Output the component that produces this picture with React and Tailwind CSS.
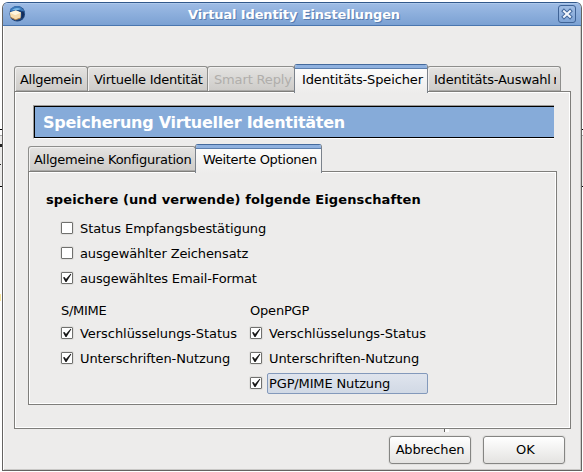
import React from "react";

function Tab({ label, active, disabled, className, textClass = "" }) {
  if (active) {
    return (
      <div
        className={`relative z-10 -mb-[2px] flex h-[29px] flex-col overflow-hidden rounded-t-[3px] border-x border-t border-x-[#7b828b] border-t-[#456a9c] bg-linear-to-b from-white to-[#edeceb] ${className}`}
      >
        <div className="h-[3px] shrink-0 bg-[#8fb1df]" />
        <div className="h-px shrink-0 bg-[#5d80ae]" />
        <span className={`pt-[3px] pl-[7px] leading-[16px] whitespace-nowrap ${textClass}`}>{label}</span>
      </div>
    );
  }
  return (
    <div
      className={`h-[25px] overflow-hidden rounded-t-[3px] border-x border-t border-[#8e8e8c] bg-linear-to-b from-[#e4e3e1] to-[#cdcbc8] shadow-[inset_1px_1px_0_#f1f0ef,inset_0_-1px_0_#aaa9a7] ${className}`}
    >
      <div className={`pt-[5px] pl-[5px] leading-[16px] whitespace-nowrap ${disabled ? "text-[#b0aeab]" : ""} ${textClass}`}>
        {label}
      </div>
    </div>
  );
}

function Check({ label, checked, focused, textClass = "" }) {
  return (
    <div className="flex h-[25px] items-center">
      <span className="-mt-px flex h-[12px] w-[12px] shrink-0 items-center justify-center rounded-[1px] border border-[#70706e] bg-white shadow-[0_0_0_1px_#e0dfdd]">
        {checked && (
          <svg width="10" height="10" viewBox="0 0 10 10" className="block">
            <path d="M1 4.5 2.5 4 4 6 8.6 0.8 9.3 1.3 4.5 9 3.5 9Z" fill="#171717" />
          </svg>
        )}
      </span>
      <span
        className={`ml-[5px] h-[21px] w-[161px] rounded-[2px] border pl-px leading-[19px] whitespace-nowrap ${
          focused ? "border-[#8399bb] bg-linear-to-b from-[#dfe4ed] to-[#d1d9e5]" : "border-transparent"
        } ${textClass}`}
      >
        {label}
      </span>
    </div>
  );
}

function Button({ label, className = "" }) {
  return (
    <button
      className={`h-[28px] w-[82px] rounded-[3px] border border-[#858583] bg-linear-to-b from-white to-[#e4e3e1] pb-px whitespace-nowrap shadow-[0_0_0_1px_#e2e1df] ${className}`}
    >
      {label}
    </button>
  );
}

export default function App() {
  return (
    <div className="relative h-[472px] w-[583px] overflow-hidden bg-white font-['DejaVu_Sans',sans-serif] text-[13px] text-black">
      {/* edges of the windows lying behind the dialog */}
      <div className="absolute top-[129px] left-0 h-[58px] w-[583px] border-y border-black bg-white">
        <div className="mt-[5px] h-px bg-[#aaa]" />
        <div className="h-[50px] bg-[#edeceb]" />
      </div>
      <div className="absolute top-[144px] left-0 h-[3px] w-[2px] bg-[#222]" />
      <div className="absolute top-[164px] left-0 h-px w-px bg-[#222]" />
      <div className="absolute top-[294px] left-0 h-[7px] w-px bg-[#fce79a]" />

      <div className="relative mt-[2px] ml-[2px] flex h-[469px] w-[580px] flex-col overflow-hidden rounded-t-[6px] border border-t-[#31588b] border-r-[#656361] border-b-[#656361] border-l-[#656361] bg-[#edeceb] shadow-[inset_1px_0_0_#fff,inset_-1px_-1px_0_#c9c8c6]">
        <header className="flex h-[23px] shrink-0 items-center border-b border-[#4a76af] bg-linear-to-b from-[#9ebce5] to-[#7ba1d3] px-[5px] shadow-[inset_0_1px_0_#adc8eb]">
          <svg width="18" height="18" viewBox="0 0 18 18" className="shrink-0">
            <circle cx="9.3" cy="8.8" r="7.8" fill="#1d4379" />
            <path d="M2 4Q8-1 13 2.2q4 3 3.5 7-1.6-3.5-5.6-4.2L3 7Z" fill="#3c78b8" />
            <path d="M4 5Q8 1.5 13 4L10 5Z" fill="#78b7e5" />
            <path d="m1.8 7.4 6-2 5.2 2-.4 5.6-5.1 1.8-5-2.5Z" fill="#f7dcae" />
            <path d="m1.8 7.4 5.4 2.8 5.8-2.8-5.2-2Z" fill="#fff5de" />
            <path d="m2.5 12.3 5 2.5 5.1-1.8" fill="none" stroke="#b07c42" />
            <path d="M13 7q2.5 3-.5 6.6l2.7-1.4Q17 9 15.5 6Z" fill="#132c58" />
          </svg>
          <h1 className="flex-1 pt-[2px] pl-[4px] text-center text-[13px] leading-[16px] font-bold tracking-[-0.14px] text-white [text-shadow:1px_1px_0_#587db0]">
            Virtual Identity Einstellungen
          </h1>
          <button className="flex h-[18px] w-[18px] items-center justify-center rounded-[3px] border border-[#3f6396] bg-linear-to-b from-[#a0bde4] to-[#7fa4d6]">
            <svg width="12" height="12" viewBox="0 0 12 12">
              <path d="m3 3.2 6 5.6m0-5.6-6 5.6" stroke="#456a9d" strokeWidth="4" strokeLinecap="square" />
              <path d="m3 3.2 6 5.6m0-5.6-6 5.6" stroke="#f2f6fc" strokeWidth="2" strokeLinecap="square" />
            </svg>
          </button>
        </header>

        <main className="pt-[38px] pl-[11px]">
          <div className="flex h-[27px] items-end">
            <Tab label="Allgemein" className="w-[74px]" textClass="tracking-[-0.3px]" />
            <Tab label="Virtuelle Identität" className="-ml-px w-[121px]" textClass="pl-[6px] tracking-[-0.25px]" />
            <Tab label="Smart Reply" disabled className="-ml-px w-[88px]" textClass="pl-[6px] tracking-[-0.15px]" />
            <Tab label="Identitäts-Speicher" active className="-ml-px w-[134px]" textClass="tracking-[-0.14px]" />
            <Tab label="Identitäts-Auswahl r" className="-ml-px w-[134px]" textClass="mr-[4px] overflow-hidden pl-[6px] tracking-[-0.22px] [word-spacing:-1.5px]" />
          </div>

          <section className="h-[338px] w-[557px] border border-[#7f7e7b] pt-[13px] shadow-[inset_1px_1px_0_#fff,inset_-1px_-1px_0_#fff]">
            <div className="ml-[18px] w-[521px] border-t border-b border-l border-t-[#9d9b98] border-b-white border-l-[#9d9b98]">
              <h2 className="h-[32px] border-y border-l border-black bg-[#86abd9] pl-[8px] text-[16px] leading-[31px] font-bold tracking-[-0.25px] whitespace-nowrap text-white">
                Speicherung Virtueller Identitäten
              </h2>
            </div>

            <div className="mt-[5px] ml-[13px] flex h-[27px] items-end">
              <Tab label="Allgemeine Konfiguration" className="w-[168px]" textClass="tracking-[-0.27px]" />
              <Tab label="Weiterte Optionen" active className="-ml-px w-[127px]" textClass="tracking-[-0.3px]" />
            </div>

            <div className="ml-[13px] h-[234px] w-[529px] border border-[#7f7e7b] pt-[15px] shadow-[inset_1px_1px_0_#fff,inset_-1px_-1px_0_#fff]">
              <h3 className="pl-[17px] text-[13px] leading-[25px] font-bold tracking-[0.11px] whitespace-nowrap">
                speichere (und verwende) folgende Eigenschaften
              </h3>
              <div className="mt-[4px] pl-[32px]">
                <Check label="Status Empfangsbestätigung" textClass="tracking-[-0.08px]" />
                <Check label="ausgewählter Zeichensatz" textClass="tracking-[-0.12px]" />
                <Check label="ausgewähltes Email-Format" checked textClass="tracking-[-0.14px]" />
              </div>
              <div className="mt-[10px] flex pl-[32px]">
                <div className="w-[189px]">
                  <div className="h-[20px] leading-[20px] tracking-[-0.3px]">S/MIME</div>
                  <Check label="Verschlüsselungs-Status" checked textClass="tracking-[-0.05px]" />
                  <Check label="Unterschriften-Nutzung" checked textClass="tracking-[-0.1px]" />
                </div>
                <div>
                  <div className="h-[20px] leading-[20px] tracking-[-0.2px]">OpenPGP</div>
                  <Check label="Verschlüsselungs-Status" checked textClass="tracking-[-0.05px]" />
                  <Check label="Unterschriften-Nutzung" checked textClass="tracking-[-0.1px]" />
                  <Check label="PGP/MIME Nutzung" checked focused textClass="tracking-[-0.14px]" />
                </div>
              </div>
            </div>
          </section>

          <div className="ml-[430px] flex h-[3px] w-[5px] bg-white">
            <div className="w-px bg-[#656361]" />
          </div>
          <footer className="mt-[4px] ml-[375px] flex gap-[12px]">
            <Button label="Abbrechen" className="tracking-[-0.15px]" />
            <Button label="OK" className="pl-[3px]" />
          </footer>
        </main>
      </div>
    </div>
  );
}
